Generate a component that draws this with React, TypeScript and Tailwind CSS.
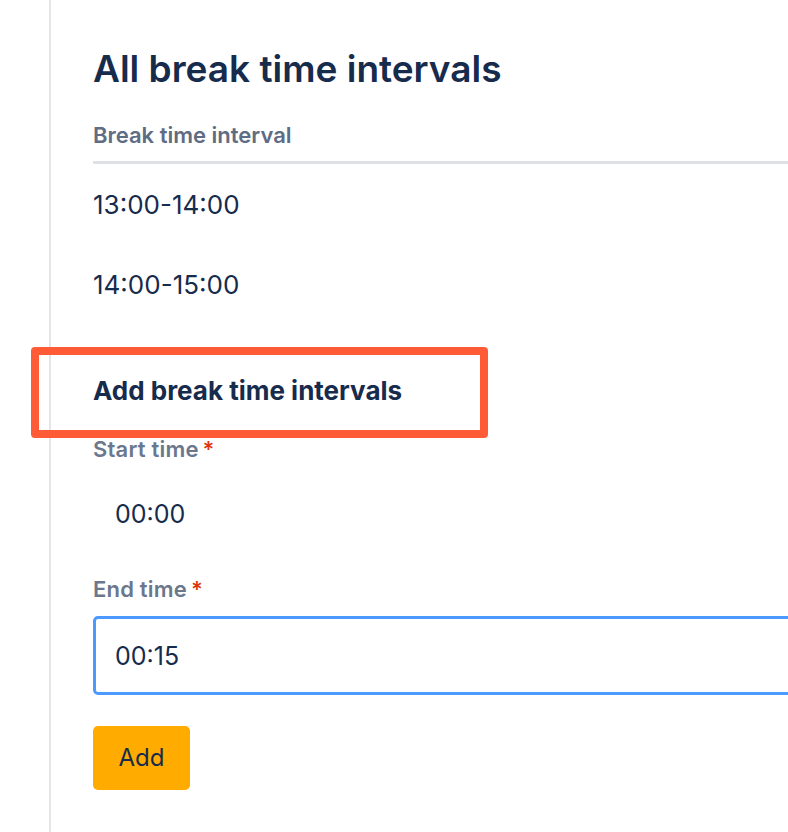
import React from 'react';

const intervals = ['13:00-14:00', '14:00-15:00'];

function FieldLabel({ children }: { children: React.ReactNode }) {
  return (
    <div className="text-[22px] leading-[26px] font-semibold tracking-[0.2px] text-[#6B778C]">
      {children}
      <span className="ml-[4px] text-[#DE350B]">*</span>
    </div>
  );
}

export default function App() {
  return (
    <div
      className="flex min-h-[832px] w-[788px] overflow-hidden bg-white text-[#172B4D]"
      style={{ fontFamily: 'Inter, "Noto Sans", sans-serif' }}
    >
      {/* left rail */}
      <div className="w-[51px] shrink-0 border-r-2 border-[#E4E5E9]" />

      <div className="w-[800px] shrink-0 pl-[42px] pt-[46px]">
        <h1 className="text-[37px] leading-[46px] font-semibold">All break time intervals</h1>

        {/* table */}
        <div className="mt-[30px]">
          <div className="border-b-[3px] border-[#DFE1E6] pb-[13px] text-[22px] leading-[26px] font-semibold text-[#5E6C84]">
            Break time interval
          </div>
          {intervals.map((row) => (
            <div key={row} className="h-[80px] pt-[25px] text-[26px] leading-[32px]">
              {row}
            </div>
          ))}
        </div>

        {/* add form */}
        <div className="relative mt-[51px] w-fit">
          <h2 className="text-[26px] leading-[32px] font-bold">Add break time intervals</h2>
          <div className="pointer-events-none absolute left-[-62px] top-[-28px] h-[91px] w-[457px] rounded-[4px] border-[8px] border-[#FF5B37]" />
        </div>

        <div className="mt-[29px]">
          <FieldLabel>Start time</FieldLabel>
        </div>
        <div className="mt-[36px] pl-[22px] text-[25px] leading-[32px]">00:00</div>

        <div className="mt-[46px]">
          <FieldLabel>End time</FieldLabel>
        </div>
        <div className="mt-[14px] flex h-[79px] items-center rounded-[5px] border-[3px] border-[#4C9AFF] pl-[19px] text-[25px] leading-[32px]">
          00:15
        </div>

        <button className="mt-[31px] h-[64px] w-[97px] rounded-[5px] bg-[#FFAB00] text-[24px] text-[#172B4D]">
          Add
        </button>
      </div>
    </div>
  );
}
